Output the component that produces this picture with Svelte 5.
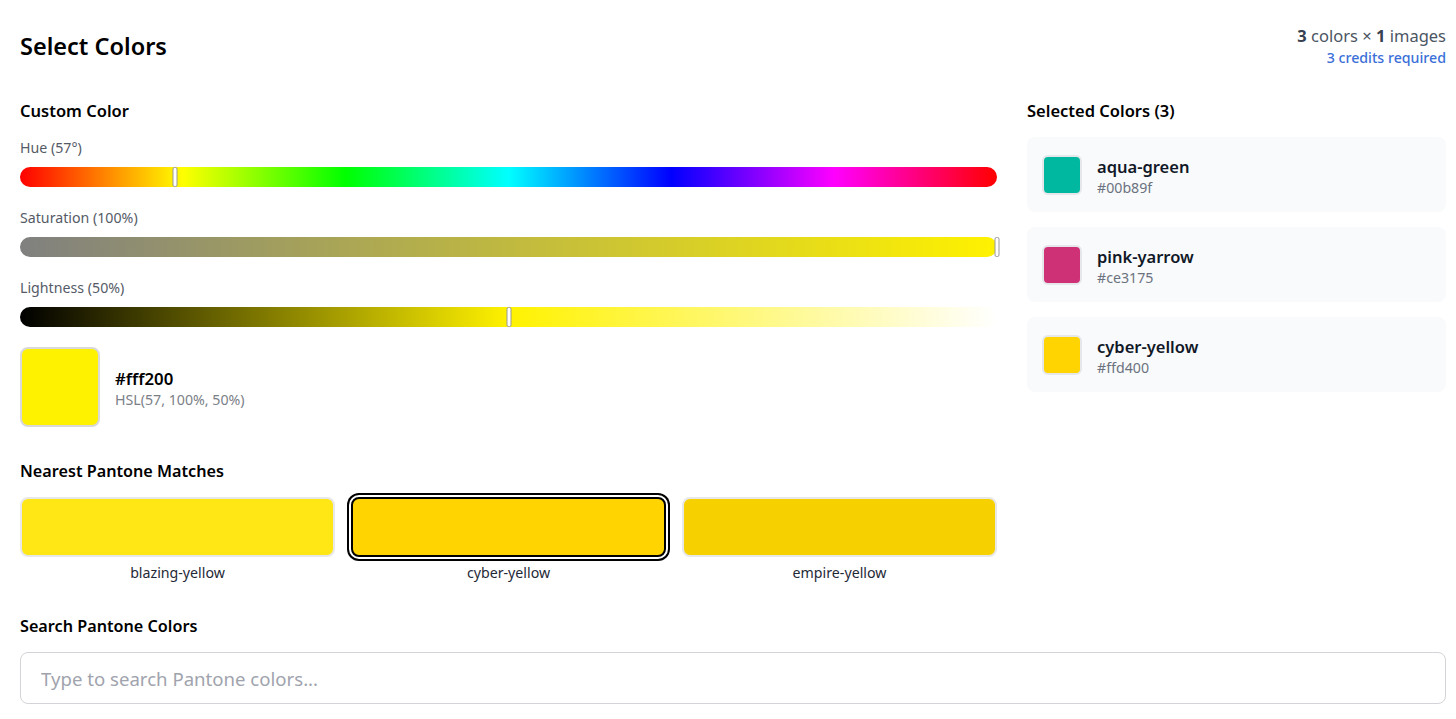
<script>
	let hue = 57;
	let sat = 100;
	let light = 50;

	const selected = [
		{ name: 'aqua-green', hex: '#00b89f' },
		{ name: 'pink-yarrow', hex: '#ce3175' },
		{ name: 'cyber-yellow', hex: '#ffd400' }
	];

	const matches = [
		{ name: 'blazing-yellow', hex: '#fee715', active: false },
		{ name: 'cyber-yellow', hex: '#ffd400', active: true },
		{ name: 'empire-yellow', hex: '#f7d000', active: false }
	];

	const sliders = [
		{ label: `Hue (${hue}°)`, pos: (hue / 360) * 100, kind: 'hue' },
		{ label: `Saturation (${sat}%)`, pos: sat, kind: 'sat' },
		{ label: `Lightness (${light}%)`, pos: light, kind: 'light' }
	];
</script>

<div class="page">
	<header class="top">
		<h1>Select Colors</h1>
		<div class="summary">
			<div class="count"><strong>3</strong> colors × <strong>1</strong> images</div>
			<div class="credits">3 credits required</div>
		</div>
	</header>

	<div class="columns">
		<section class="left">
			<h2 class="wide">Custom Color</h2>
			{#each sliders as s}
				<div class="slider-group">
					<div class="slider-label">{s.label}</div>
					<div class="track {s.kind}">
						<span class="thumb" style="left: {s.pos}%"></span>
					</div>
				</div>
			{/each}

			<div class="preview">
				<div class="preview-swatch"></div>
				<div class="preview-text">
					<div class="preview-hex">#fff200</div>
					<div class="preview-hsl">HSL(57, 100%, 50%)</div>
				</div>
			</div>

			<h2 class="matches-title">Nearest Pantone Matches</h2>
			<div class="matches">
				{#each matches as m}
					<div class="match">
						<div class="match-swatch" class:active={m.active} style="background: {m.hex}"></div>
						<div class="match-name">{m.name}</div>
					</div>
				{/each}
			</div>
		</section>

		<aside class="right">
			<h2 class="wide">Selected Colors (3)</h2>
			<div class="cards">
				{#each selected as c}
					<div class="card">
						<div class="card-swatch" style="background: {c.hex}"></div>
						<div class="card-text">
							<div class="card-name">{c.name}</div>
							<div class="card-hex">{c.hex}</div>
						</div>
					</div>
				{/each}
			</div>
		</aside>
	</div>

	<h2 class="search-title">Search Pantone Colors</h2>
	<input class="search" type="text" placeholder="Type to search Pantone colors..." />
</div>

<style>
	:global(body) {
		margin: 0;
		background: #fff;
	}

	.page {
		padding: 0 10px 0 20px;
		font-family: "Noto Sans", "Open Sans", sans-serif;
		color: #000;
	}

	.top {
		display: flex;
		justify-content: space-between;
		align-items: flex-start;
		height: 100px;
	}

	h1 {
		margin: 30px 0 0;
		font-size: 23.5px;
		line-height: 32px;
		font-weight: 600;
	}

	.summary {
		margin-top: 24px;
		text-align: right;
	}

	.count {
		font-size: 16.5px;
		line-height: 24px;
		color: #4b5563;
	}

	.count strong {
		font-weight: 700;
		color: #374151;
	}

	.credits {
		font-size: 14.2px;
		line-height: 20px;
		font-weight: 500;
		color: #3b6fd8;
	}

	.columns {
		display: grid;
		grid-template-columns: 977px 419px;
		gap: 30px;
	}

	h2 {
		margin: 0;
		font-size: 16.2px;
		line-height: 22px;
		font-weight: 600;
	}

	h2.wide {
		font-size: 16.5px;
	}

	.slider-group {
		height: 70px;
	}

	.left > h2 {
		margin-bottom: 16px;
	}

	.slider-label {
		font-size: 14.2px;
		line-height: 20px;
		height: 29px;
		color: #555b66;
	}

	.track {
		position: relative;
		height: 20px;
		border-radius: 10px;
	}

	.track.hue {
		background: linear-gradient(to right, #f00, #ff0, #0f0, #0ff, #00f, #f0f, #f00);
	}

	.track.sat {
		background: linear-gradient(to right, #808080, #fff200);
	}

	.track.light {
		background: linear-gradient(to right, #000, #fff200, #fff);
	}

	.thumb {
		position: absolute;
		top: 0;
		width: 5px;
		height: 20px;
		box-sizing: border-box;
		transform: translateX(-50%);
		background: #fff;
		border: 1px solid #999;
		border-radius: 2px;
	}

	.preview {
		display: flex;
		align-items: center;
		gap: 15px;
		margin-top: -1px;
	}

	.preview-swatch {
		width: 80px;
		height: 80px;
		box-sizing: border-box;
		background: #fff200;
		border: 2px solid #d9d9d9;
		border-radius: 8px;
	}

	.preview-text {
		padding-top: 3px;
	}

	.preview-hex {
		font-size: 16.8px;
		line-height: 23px;
		font-weight: 600;
	}

	.preview-hsl {
		font-size: 14.2px;
		line-height: 20px;
		color: #7b7f87;
	}

	.left > .matches-title {
		margin-top: 33px;
		margin-bottom: 15px;
	}

	.matches {
		display: grid;
		grid-template-columns: repeat(3, 1fr);
		gap: 16px;
	}

	.match-swatch {
		height: 60px;
		box-sizing: border-box;
		border: 2px solid #e8e8e8;
		border-radius: 8px;
	}

	.match-swatch.active {
		border-color: #000;
		box-shadow: 0 0 0 2px #fff, 0 0 0 4px #000;
	}

	.match-name {
		margin-top: 6px;
		text-align: center;
		font-size: 14.2px;
		line-height: 20px;
		color: #1f2937;
	}

	.cards {
		display: flex;
		flex-direction: column;
		gap: 15px;
		margin-top: 15px;
	}

	.card {
		display: flex;
		align-items: center;
		gap: 15px;
		height: 75px;
		padding: 0 15px;
		box-sizing: border-box;
		background: #f9fafb;
		border-radius: 8px;
	}

	.card-swatch {
		width: 40px;
		height: 40px;
		box-sizing: border-box;
		border: 2px solid #e5e7eb;
		border-radius: 6px;
	}

	.card-text {
		padding-top: 4px;
	}

	.card-name {
		font-size: 16.5px;
		line-height: 22px;
		font-weight: 600;
		color: #111827;
	}

	.card-hex {
		font-size: 14.2px;
		line-height: 20px;
		color: #6b7280;
	}

	.search-title {
		margin-top: 32px;
	}

	.search {
		display: block;
		width: 100%;
		height: 52px;
		margin-top: 15px;
		padding: 0 20px;
		box-sizing: border-box;
		font-family: inherit;
		font-size: 18.6px;
		border: 1px solid #d4d4d8;
		border-radius: 8px;
		outline: none;
	}

	.search::placeholder {
		color: #a0a3ad;
	}
</style>
